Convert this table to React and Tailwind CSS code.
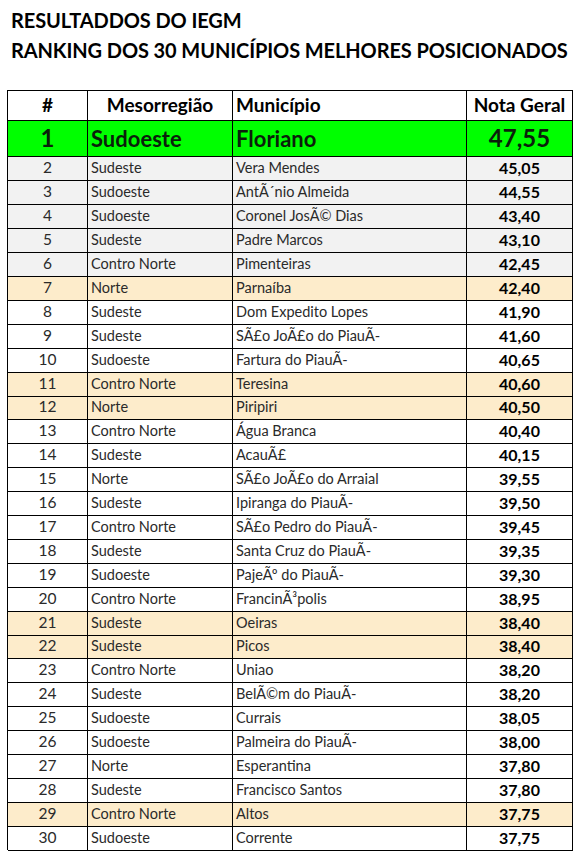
import React from 'react';

const rows = [
  [2, 'Sudeste', 'Vera Mendes', '45,05', 'g'],
  [3, 'Sudoeste', 'AntÃ´nio Almeida', '44,55', 'g'],
  [4, 'Sudoeste', 'Coronel JosÃ© Dias', '43,40', 'g'],
  [5, 'Sudeste', 'Padre Marcos', '43,10', 'g'],
  [6, 'Contro Norte', 'Pimenteiras', '42,45', 'g'],
  [7, 'Norte', 'Parnaíba', '42,40', 'p'],
  [8, 'Sudeste', 'Dom Expedito Lopes', '41,90', 'w'],
  [9, 'Sudeste', 'SÃ£o JoÃ£o do PiauÃ-', '41,60', 'w'],
  [10, 'Sudoeste', 'Fartura do PiauÃ-', '40,65', 'w'],
  [11, 'Contro Norte', 'Teresina', '40,60', 'p'],
  [12, 'Norte', 'Piripiri', '40,50', 'p'],
  [13, 'Contro Norte', 'Água Branca', '40,40', 'w'],
  [14, 'Sudeste', 'AcauÃ£', '40,15', 'w'],
  [15, 'Norte', 'SÃ£o JoÃ£o do Arraial', '39,55', 'w'],
  [16, 'Sudeste', 'Ipiranga do PiauÃ-', '39,50', 'w'],
  [17, 'Contro Norte', 'SÃ£o Pedro do PiauÃ-', '39,45', 'w'],
  [18, 'Sudeste', 'Santa Cruz do PiauÃ-', '39,35', 'w'],
  [19, 'Sudoeste', 'PajeÃº do PiauÃ-', '39,30', 'w'],
  [20, 'Contro Norte', 'FrancinÃ³polis', '38,95', 'w'],
  [21, 'Sudeste', 'Oeiras', '38,40', 'p'],
  [22, 'Sudeste', 'Picos', '38,40', 'p'],
  [23, 'Contro Norte', 'Uniao', '38,20', 'w'],
  [24, 'Sudeste', 'BelÃ©m do PiauÃ-', '38,20', 'w'],
  [25, 'Sudoeste', 'Currais', '38,05', 'w'],
  [26, 'Sudoeste', 'Palmeira do PiauÃ-', '38,00', 'w'],
  [27, 'Norte', 'Esperantina', '37,80', 'w'],
  [28, 'Sudeste', 'Francisco Santos', '37,80', 'w'],
  [29, 'Contro Norte', 'Altos', '37,75', 'p'],
  [30, 'Sudoeste', 'Corrente', '37,75', 'w'],
];

const bg = { g: 'bg-[#f2f2f2]', p: 'bg-[#fdeccb]', w: 'bg-white' };

const cols = 'grid grid-cols-[80px_145px_234px_106px]';
const cell = 'border-r border-b border-black flex items-center';

export default function App() {
  return (
    <div className="w-[580px] h-[851px] bg-white text-black font-['Lato','Liberation_Sans',sans-serif] overflow-hidden">
      <div className="pl-[11px] pt-[5px] font-bold text-[20px] leading-[30px] tracking-[-0.1px]">
        <div>RESULTADDOS DO IEGM</div>
        <div>RANKING DOS 30 MUNICÍPIOS MELHORES POSICIONADOS</div>
      </div>

      <div className="ml-[7px] mt-[25px] w-[566px] border-l border-t border-black">
        <div className={`${cols} h-[29px] font-bold text-[19px]`}>
          <div className={`${cell} justify-center`}>#</div>
          <div className={`${cell} justify-center`}>Mesorregião</div>
          <div className={`${cell} pl-[3px]`}>Município</div>
          <div className={`${cell} justify-center`}>Nota Geral</div>
        </div>

        <div className={`${cols} h-[36px] font-bold text-[22px] bg-[#00ff00] text-[#0b1f0b]`}>
          <div className={`${cell} justify-center text-[24px]`}>1</div>
          <div className={`${cell} pl-[3px]`}>Sudoeste</div>
          <div className={`${cell} pl-[3px]`}>Floriano</div>
          <div className={`${cell} justify-center text-[24px]`}>47,55</div>
        </div>

        {rows.map(([n, meso, mun, nota, c]) => (
          <div
            key={n}
            className={`${cols} ${n === 11 || n === 21 ? 'h-[23px]' : 'h-[24px]'} text-[14.5px] text-[#2a2a2a] ${bg[c]}`}
          >
            <div className={`${cell} justify-center text-[15.5px]`}>{n}</div>
            <div className={`${cell} pl-[3px]`}>{meso}</div>
            <div className={`${cell} pl-[3px]`}>{mun}</div>
            <div className={`${cell} justify-center font-bold text-[16px] text-black`}>{nota}</div>
          </div>
        ))}
      </div>
    </div>
  );
}
